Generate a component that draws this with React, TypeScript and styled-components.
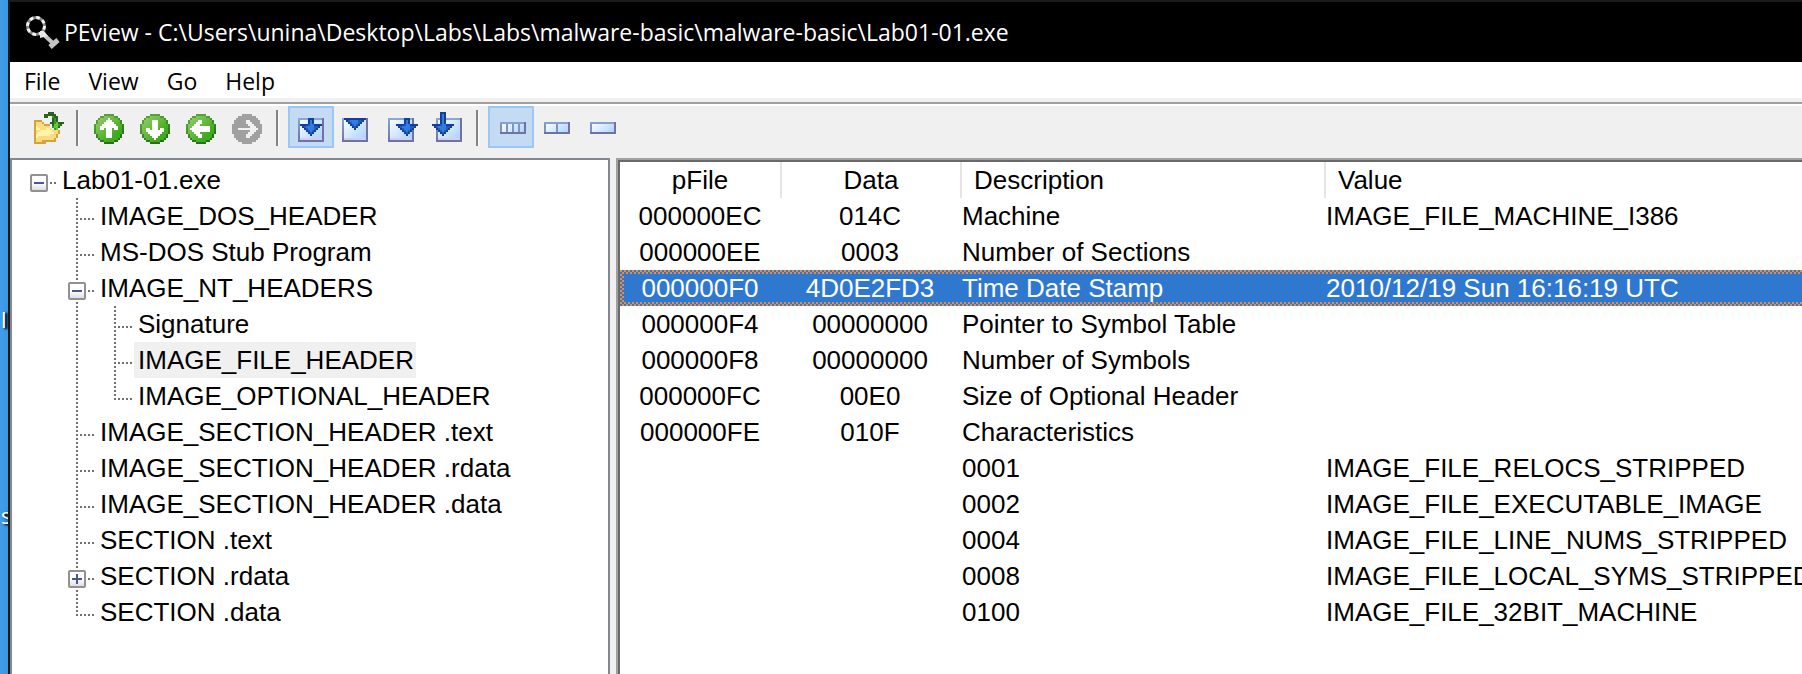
import React, { useState } from 'react';
import styled, { createGlobalStyle, css } from 'styled-components';

const sans = '"Liberation Sans", Arial, sans-serif';
const ui = '"Segoe UI", "Open Sans", sans-serif';

const GlobalStyle = createGlobalStyle`
  *, *::before, *::after { box-sizing: border-box; }
  body { margin: 0; overflow: hidden; background: #f0f0f0; color: #000; }
  button { font: inherit; color: inherit; border: 0; padding: 0; background: none; }
  ul { margin: 0; padding: 0; list-style: none; }
`;

const Screen = styled.div`
  display: flex;
  min-height: 100vh;
`;

const Desktop = styled.div`
  flex: 0 0 8px;
  overflow: hidden;
  display: flex;
  flex-direction: column;
  gap: 166px;
  padding-top: 304px;
  background: linear-gradient(90deg, #419de8, #3d97df);
  font: 22px/30px ${ui};
  color: #fff;
  text-shadow: 2px 1px 2px #000, 3px 1px 3px #0b2a4a;
`;

const DesktopLabel = styled.span`
  padding-left: 1px;
`;

const Window = styled.main`
  flex: 1;
  min-width: 0;
  display: flex;
  flex-direction: column;
  border-left: 2px solid #1b1b1b;
  background: #f0f0f0;
`;

const TitleBar = styled.header`
  display: flex;
  align-items: center;
  gap: 4px;
  height: 62px;
  padding: 0 16px;
  border-top: 2px solid #1b1b1b;
  background: #000;
  color: #fff;
`;

const Title = styled.h1`
  margin: 0;
  font: 400 23px/32px ${ui};
  white-space: nowrap;
`;

const MenuBar = styled.nav`
  display: flex;
  gap: 28px;
  height: 36px;
  padding: 0 14px;
  background: #fff;
`;

const MenuItem = styled.button`
  font: 23px/38px ${ui};
`;

const ToolBar = styled.div`
  display: flex;
  align-items: flex-start;
  height: 56px;
  margin-top: 4px;
  padding: 0 16px;
  border-top: 2px solid #a0a0a0;
  box-shadow: inset 0 2px #fff;
`;

const Tool = styled.button<{ $on?: boolean }>`
  display: flex;
  width: 46px;
  height: 42px;
  margin-top: 2px;
  padding: 4px;
  border: 2px solid ${p => (p.$on ? '#99c8f5' : 'transparent')};
  background: ${p => (p.$on ? '#c4dbf3' : 'transparent')};
`;

const Separator = styled.span`
  width: 4px;
  height: 36px;
  margin: 6px 8px 0 4px;
  border-left: 2px solid #858585;
  border-right: 2px solid #f7f7f7;
`;

const Panes = styled.div`
  flex: 1;
  display: flex;
  gap: 6px;
`;

const TreePane = styled.section`
  flex: 0 0 600px;
  padding: 2px 8px;
  border: 2px solid #828790;
  border-bottom: 0;
  background: #fff;
  font: 26px/36px ${sans};
`;

const TreeRow = styled.div`
  display: flex;
  height: 36px;
`;

const dots = (to: string) => `repeating-linear-gradient(to ${to}, #707070 0 2px, transparent 2px 4px)`;

type Guide = 'blank' | 'pass' | 'branch' | 'last' | 'root';

const guides: Record<Guide, ReturnType<typeof css>> = {
  blank: css``,
  pass: css`background: ${dots('bottom')} 18px 0 / 2px 100% no-repeat;`,
  branch: css`background: ${dots('bottom')} 18px 0 / 2px 100% no-repeat,
    ${dots('right')} 18px 20px / 18px 2px no-repeat;`,
  last: css`background: ${dots('bottom')} 18px 0 / 2px 22px no-repeat,
    ${dots('right')} 18px 20px / 18px 2px no-repeat;`,
  root: css`background: ${dots('right')} 18px 20px / 18px 2px no-repeat;`,
};

const GuideCell = styled.span<{ $kind: Guide }>`
  flex: 0 0 38px;
  padding: 12px 10px;
  line-height: 0;
  ${p => guides[p.$kind]}
`;

const Expander = styled.button`
  display: grid;
  place-items: center;
  width: 18px;
  height: 18px;
  border: 2px solid #919191;
  border-radius: 2px;
  background: linear-gradient(#fff 50%, #dedede);
`;

const NodeLabel = styled.span<{ $selected?: boolean }>`
  padding: 0 2px 0 4px;
  white-space: nowrap;
  background: ${p => (p.$selected ? '#f0f0f0' : 'transparent')};
`;

const ListPane = styled.section`
  flex: 1;
  min-width: 0;
  overflow: hidden;
  border: 2px solid #a0a0a0;
  border-width: 2px 0 0 2px;
  box-shadow: inset 2px 2px #696969;
  padding: 2px 0 0 2px;
  background: #fff;
`;

const Table = styled.table`
  width: 100%;
  table-layout: fixed;
  border-collapse: separate;
  border-spacing: 0;
  font: 26px/36px ${sans};
`;

const HeadCell = styled.th<{ $center?: boolean; $width?: number }>`
  width: ${p => (p.$width ? `${p.$width}px` : 'auto')};
  height: 36px;
  padding: ${p => (p.$center ? '0' : '0 12px')};
  border-left: 2px solid #e5e5e5;
  font-weight: 400;
  text-align: ${p => (p.$center ? 'center' : 'left')};
  &:first-child { border-left: 0; }
`;

const Row = styled.tr<{ $selected?: boolean }>`
  ${p => p.$selected && css`
    color: #fff;
    background:
      linear-gradient(#2f78d0, #2f78d0) 4px 4px / 100% 28px no-repeat,
      repeating-conic-gradient(#2f78d0 0 25%, #f08a3c 0 50%) 0 0 / 4px 4px;
  `}
`;

const Cell = styled.td<{ $center?: boolean }>`
  height: 36px;
  padding: ${p => (p.$center ? '0' : '0 0 0 2px')};
  overflow: hidden;
  white-space: nowrap;
  text-align: ${p => (p.$center ? 'center' : 'left')};
`;

type Painter = (x: number, y: number) => string | null;

/** A 16 by 16 bitmap icon, each cell drawn as a square. */
function PixelIcon({ paint }: { paint: Painter }) {
  const cells: React.ReactNode[] = [];
  for (let y = 0; y < 16; y++) {
    for (let x = 0; x < 16; x++) {
      const fill = paint(x, y);
      if (fill) cells.push(<rect key={`${x}-${y}`} x={x} y={y} width="1" height="1" fill={fill} />);
    }
  }
  return (
    <svg width="32" height="32" viewBox="0 0 16 16" shapeRendering="crispEdges" aria-hidden="true">
      {cells}
    </svg>
  );
}

const mix = (a: number[], b: number[], t: number) => {
  const k = Math.max(0, Math.min(1, t));
  return `rgb(${a.map((v, i) => Math.round(v + (b[i] - v) * k)).join(',')})`;
};

const upArrow = [
  '.......#.......',
  '......###......',
  '.....#####.....',
  '....#######....',
  '...#########...',
  '...##.###.##...',
  '......###......',
  '......###......',
  '......###......',
  '......###......',
];

type Direction = 'up' | 'down' | 'left' | 'right';

/** Round navigation button; the forward one is greyed out with a thin arrow. */
const round = (dir: Direction): Painter => (x, py) => {
  const y = py - 1;
  if (x > 14 || y < 0) return null;
  const r = Math.hypot(x - 7, y - 7);
  if (r > 7.5) return null;
  if (dir === 'right') {
    const off = Math.abs(y - 7);
    const shaft = y === 7 && x > 2 && x < 12;
    const head = off < 5 && off <= 12 - x && off >= 10 - x && x > 6;
    return shaft || head ? '#f0f0f0' : '#a0a0a0';
  }
  const [ax, ay] = { up: [x, y], down: [x, 14 - y], left: [y, x] }[dir];
  if (upArrow[ay - 2]?.[ax] === '#') return '#fff';
  if (r > 6.6) return mix([86, 160, 62], [38, 112, 22], (x + y * 2 - 8) / 26);
  return mix([156, 212, 112], [66, 170, 30], (x + y) / 20);
};

const folderRows = [
  '........ddd.....',
  '......dddddd....',
  '......dd..mdd...',
  '..........dmd...',
  '.oooo.....dmd...',
  '.oyyyo...ddmgddd',
  '.oyyyyooo.dggmd.',
  '.owyyyyyy.mggd..',
  '.owwyyywwy.mg...',
  '.oyywwwwwwyyyo..',
  '.oywwwwwwwwyyo..',
  '.owwwwwwwyyyo...',
  '.owyyyyyyyyyo...',
  '.oyyyyyyyyyo....',
  '.oyyyooooooo....',
  '.oooooo.........',
];
const folderInk: Record<string, string> = {
  d: '#27641c', m: '#3d9428', g: '#62c83c', o: '#d8a23a', y: '#f8dc80', w: '#fff5a8',
};
const folder: Painter = (x, y) => folderInk[folderRows[y][x]] ?? null;

const sheet = (left: number, arrow: string[], ax: number, ay: number): Painter => (x, y) => {
  const mark = arrow[y - ay]?.[x - ax];
  if (mark === '#') return '#123f9e';
  if (mark === '*') return '#2f7de2';
  if (mark === '+') return '#2259bd';
  if (x < left || x > left + 12 || y < 3 || y > 14) return null;
  if (y === 14 || x === left + 12) return '#7072a4';
  if (y === 3) return '#86a8d8';
  if (x === left) return mix([130, 164, 216], [112, 114, 168], (y - 3) / 11);
  if (y === 13) return '#d3cdf6';
  return mix([246, 251, 255], [176, 212, 255], (x - left + y - 5) / 18);
};

const arrowHead = [
  '####+**####',
  '.#+****++#.',
  '..#+***+#..',
  '...#+*+#...',
  '....#+#....',
  '.....#.....',
];
const stem = '....#*#....';
const shortArrow = ['....###....', stem, stem, ...arrowHead];
const longArrow = ['....###....', stem, stem, stem, stem, stem, ...arrowHead];
const wedge = ['###########', ...arrowHead.slice(1)];

const bar = (left: number, dividers: number[]): Painter => (x, y) => {
  if (x < left || x > left + 12 || y < 5 || y > 10) return null;
  if (y === 10 || x === left + 12) return '#7072a4';
  if (y === 5) return '#86a0cf';
  if (x === left || dividers.includes(x - left)) return '#7f92c4';
  return mix([248, 252, 255], [180, 214, 255], (x - left + y - 6) / 14);
};

interface ToolSpec { label: string; paint: Painter; group?: 'depth' | 'width' }

const toolGroups: ToolSpec[][] = [
  [{ label: 'Open', paint: folder }],
  [
    { label: 'Up', paint: round('up') },
    { label: 'Down', paint: round('down') },
    { label: 'Back', paint: round('left') },
    { label: 'Forward', paint: round('right') },
  ],
  [
    { label: 'File offset', paint: sheet(2, shortArrow, 3, 3), group: 'depth' },
    { label: 'Section offset', paint: sheet(1, wedge, 2, 3), group: 'depth' },
    { label: 'Relative address', paint: sheet(1, shortArrow, 5, 3), group: 'depth' },
    { label: 'Virtual address', paint: sheet(2, longArrow, 0, 0), group: 'depth' },
  ],
  [
    { label: 'Byte view', paint: bar(3, [3, 6, 9]), group: 'width' },
    { label: 'Word view', paint: bar(2, [6]), group: 'width' },
    { label: 'Double word view', paint: bar(2, []), group: 'width' },
  ],
];

interface TreeItem { name: string; children?: TreeItem[]; closed?: boolean }

const tree: TreeItem = {
  name: 'Lab01-01.exe',
  children: [
    { name: 'IMAGE_DOS_HEADER' },
    { name: 'MS-DOS Stub Program' },
    {
      name: 'IMAGE_NT_HEADERS',
      children: [
        { name: 'Signature' },
        { name: 'IMAGE_FILE_HEADER' },
        { name: 'IMAGE_OPTIONAL_HEADER' },
      ],
    },
    { name: 'IMAGE_SECTION_HEADER .text' },
    { name: 'IMAGE_SECTION_HEADER .rdata' },
    { name: 'IMAGE_SECTION_HEADER .data' },
    { name: 'SECTION .text' },
    { name: 'SECTION .rdata', children: [], closed: true },
    { name: 'SECTION .data' },
  ],
};

const rows: string[][] = [
  ['000000EC', '014C', 'Machine', 'IMAGE_FILE_MACHINE_I386'],
  ['000000EE', '0003', 'Number of Sections', ''],
  ['000000F0', '4D0E2FD3', 'Time Date Stamp', '2010/12/19 Sun 16:16:19 UTC'],
  ['000000F4', '00000000', 'Pointer to Symbol Table', ''],
  ['000000F8', '00000000', 'Number of Symbols', ''],
  ['000000FC', '00E0', 'Size of Optional Header', ''],
  ['000000FE', '010F', 'Characteristics', ''],
  ['', '', '0001', 'IMAGE_FILE_RELOCS_STRIPPED'],
  ['', '', '0002', 'IMAGE_FILE_EXECUTABLE_IMAGE'],
  ['', '', '0004', 'IMAGE_FILE_LINE_NUMS_STRIPPED'],
  ['', '', '0008', 'IMAGE_FILE_LOCAL_SYMS_STRIPPED'],
  ['', '', '0100', 'IMAGE_FILE_32BIT_MACHINE'],
];

function TreeNode({ item, trail, kind }: { item: TreeItem; trail: Guide[]; kind: Guide }) {
  const [open, setOpen] = useState(!item.closed);
  const next: Guide[] = [...trail, kind === 'branch' ? 'pass' : 'blank'];
  return (
    <li>
      <TreeRow>
        {trail.map((g, i) => <GuideCell key={i} $kind={g} />)}
        <GuideCell $kind={kind}>
          {item.children && (
            <Expander aria-label={`Toggle ${item.name}`} aria-expanded={open} onClick={() => setOpen(!open)}>
              <svg width="10" height="10" viewBox="0 0 10 10" stroke="#44589c" strokeWidth="2" aria-hidden="true">
                <path d={open ? 'M0 5H10' : 'M0 5H10M5 0V10'} />
              </svg>
            </Expander>
          )}
        </GuideCell>
        <NodeLabel $selected={item.name === 'IMAGE_FILE_HEADER'}>{item.name}</NodeLabel>
      </TreeRow>
      {open && item.children && (
        <ul>
          {item.children.map((child, i) => (
            <TreeNode
              key={child.name}
              item={child}
              trail={next}
              kind={i === item.children!.length - 1 ? 'last' : 'branch'}
            />
          ))}
        </ul>
      )}
    </li>
  );
}

function AppIcon() {
  return (
    <svg width="34" height="34" viewBox="0 0 34 34" fill="none" aria-hidden="true">
      <circle cx="10" cy="11" r="8.5" stroke="#8a8a8a" strokeWidth="3" />
      <circle cx="10" cy="11" r="8.5" stroke="#f2f2f2" strokeWidth="3" strokeDasharray="3.6 3.07" />
      <path d="M17 19L29 30" stroke="#c4c4c4" strokeWidth="4" />
      <path d="M14 23V16H18L22 21Z" fill="#e8e8e8" />
      <path d="M24 32L32 25" stroke="#c4c4c4" strokeWidth="5" />
    </svg>
  );
}

export default function App() {
  const [active, setActive] = useState({ depth: 'File offset', width: 'Byte view' });
  const [selected, setSelected] = useState(2);
  return (
    <>
      <GlobalStyle />
      <Screen>
        <Desktop>
          <DesktopLabel>l</DesktopLabel>
          <DesktopLabel>s</DesktopLabel>
        </Desktop>
        <Window>
          <TitleBar>
            <AppIcon />
            <Title>PEview - C:\Users\unina\Desktop\Labs\Labs\malware-basic\malware-basic\Lab01-01.exe</Title>
          </TitleBar>
          <MenuBar>
            {['File', 'View', 'Go', 'Help'].map(name => <MenuItem key={name}>{name}</MenuItem>)}
          </MenuBar>
          <ToolBar>
            {toolGroups.map((tools, i) => (
              <React.Fragment key={i}>
                {i > 0 && <Separator />}
                {tools.map(({ label, paint, group }) => (
                  <Tool
                    key={label}
                    aria-label={label}
                    disabled={label === 'Forward'}
                    $on={group && active[group] === label}
                    onClick={() => group && setActive({ ...active, [group]: label })}
                  >
                    <PixelIcon paint={paint} />
                  </Tool>
                ))}
              </React.Fragment>
            ))}
          </ToolBar>
          <Panes>
            <TreePane>
              <ul>
                <TreeNode item={tree} trail={[]} kind="root" />
              </ul>
            </TreePane>
            <ListPane>
              <Table>
                <thead>
                  <tr>
                    <HeadCell $center $width={160}>pFile</HeadCell>
                    <HeadCell $center $width={180}>Data</HeadCell>
                    <HeadCell $width={364}>Description</HeadCell>
                    <HeadCell>Value</HeadCell>
                  </tr>
                </thead>
                <tbody>
                  {rows.map((cells, i) => (
                    <Row key={i} $selected={i === selected} onClick={() => setSelected(i)}>
                      {cells.map((text, c) => <Cell key={c} $center={c < 2}>{text}</Cell>)}
                    </Row>
                  ))}
                </tbody>
              </Table>
            </ListPane>
          </Panes>
        </Window>
      </Screen>
    </>
  );
}
